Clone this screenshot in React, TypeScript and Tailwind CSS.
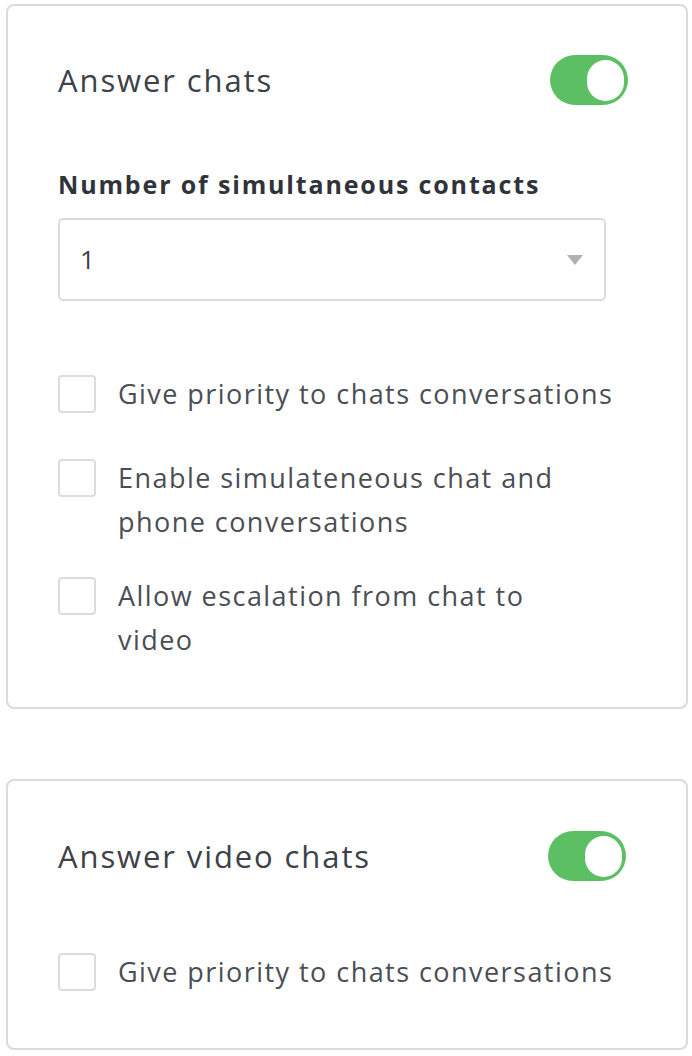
import React from "react";

function Toggle() {
  return (
    <div className="flex h-[50px] w-[78px] items-center justify-end rounded-full bg-[#5dbf64] pr-[4px]">
      <div className="h-[41px] w-[37px] rounded-full bg-white" />
    </div>
  );
}

function Checkbox({ label, className = "" }: { label: React.ReactNode; className?: string }) {
  return (
    <label className={`flex items-start ${className}`}>
      <span className="mt-[3px] h-[38px] w-[38px] shrink-0 rounded-[4px] border-2 border-[#dadcdf] bg-white" />
      <span className="ml-[22px] text-[27px] leading-[44px] tracking-[1.45px] text-[#4a4e55]">{label}</span>
    </label>
  );
}

export default function App() {
  return (
    <div
      className="min-h-screen bg-white px-[6px] pt-[4px]"
      style={{ fontFamily: "'Open Sans', Lato, sans-serif" }}
    >
      <section className="w-[682px] rounded-[8px] border-2 border-[#d9dbde] pb-[45px] pl-[50px] pr-[58px] pt-[49px]">
        <div className="flex items-center justify-between">
          <h2 className="text-[31px] leading-[40px] tracking-[1.9px] text-[#3d4148]">Answer chats</h2>
          <Toggle />
        </div>
        <div className="mt-[64px] text-[25px] font-bold leading-[30px] tracking-[1.85px] text-[#30343a]">
          Number of simultaneous contacts
        </div>
        <div className="mt-[19px] flex h-[83px] w-[548px] items-center justify-between rounded-[5px] border-2 border-[#d9dbde] pl-[20px] pr-[20px]">
          <span className="text-[26px] text-[#3d4148]">1</span>
          <svg width="18" height="12" viewBox="0 0 18 12">
            <path d="M1 1 H17 L9 11 Z" fill="#aeb1b6" />
          </svg>
        </div>
        <div className="mt-[71px] flex flex-col">
          <Checkbox label="Give priority to chats conversations" />
          <Checkbox
            className="mt-[40px]"
            label={
              <>
                Enable simulateneous chat and
                <br />
                phone conversations
              </>
            }
          />
          <Checkbox
            className="mt-[30px]"
            label={
              <>
                Allow escalation from chat to
                <br />
                video
              </>
            }
          />
        </div>
      </section>

      <section className="mt-[70px] w-[682px] rounded-[8px] border-2 border-[#d9dbde] pb-[54px] pl-[50px] pr-[60px] pt-[50px]">
        <div className="flex items-center justify-between">
          <h2 className="text-[31px] leading-[40px] tracking-[1.9px] text-[#3d4148]">Answer video chats</h2>
          <Toggle />
        </div>
        <div className="mt-[69px]">
          <Checkbox label="Give priority to chats conversations" />
        </div>
      </section>
    </div>
  );
}
